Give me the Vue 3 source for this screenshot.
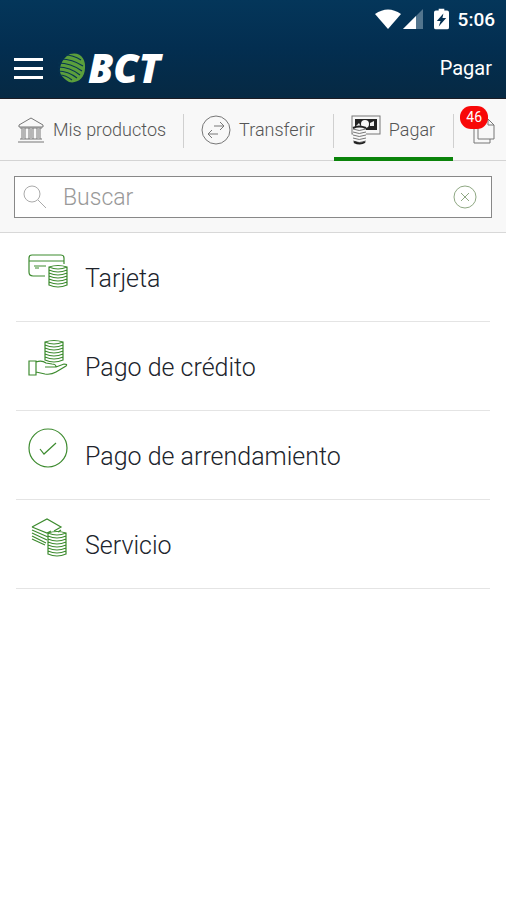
<template>
  <div class="app">
    <header class="header">
      <div class="status">
        <svg class="wifi" viewBox="0 0 26 20">
          <path d="M0 5Q13-4 26 5L13 20Z" fill="#fff" />
        </svg>
        <svg class="signal" viewBox="0 0 20 20">
          <path d="M20 0V20H0Z" fill="#52758e" />
          <path d="M13 7V20H0Z" fill="#fff" />
        </svg>
        <svg class="battery" viewBox="0 0 16 22">
          <path d="M5 0h6v2h3q2 0 2 2v16q0 2-2 2H2q-2 0-2-2V4q0-2 2-2h3z" fill="#fff" />
          <path d="M10 5 3 13h4l-2 6 8-9H9z" fill="#043052" />
        </svg>
        <span>5:06</span>
      </div>
      <div class="bar">
        <button class="menu" type="button" aria-label="Menú">
          <i></i><i></i><i></i>
        </button>
        <div class="logo">
          <svg viewBox="0 0 28 30">
            <path
              d="M12 1C23-2 28 7 27 15 27 25 19 31 11 29 7 27 5 24 3 22 0 16 3 6 12 1Z"
              fill="#5b9f3c"
            />
            <path
              d="M7 2Q15 2 23 7M3 6Q14 6 25 13M0 10Q13 10 24 18M0 14Q12 14 22 22M0 18Q10 18 19 25M1 22Q8 22 14 27"
              fill="none"
              stroke="#063453"
              stroke-width="1.1"
            />
          </svg>
          <span>BCT</span>
        </div>
        <h1>Pagar</h1>
      </div>
    </header>

    <nav class="tabs">
      <a class="tab" href="#productos">
        <svg class="bank" viewBox="0 0 28 26">
          <path
            d="M14 1 2 8v2h24V8zM3 11h22M3 22h22M1 25h26M5 11v11M8 11v11M12 11v11M16 11v11M20 11v11M23 11v11"
          />
          <path d="M6.500 11v11M14 11v11M21.500 11v11" stroke="#b5b5b5" stroke-width="2" />
        </svg>
        Mis productos
      </a>
      <a class="tab" href="#transferir">
        <svg class="swap" viewBox="0 0 30 30">
          <circle cx="15" cy="15" r="14" />
          <path d="M13 11h10M19 7l4 4-4 4M17 19H7M11 15l-4 4 4 4" />
        </svg>
        Transferir
      </a>
      <a class="tab active" href="#pagar" aria-current="page">
        <svg class="cash" viewBox="0 0 30 30">
          <rect x="1" y="1" width="28" height="18" stroke="#777" />
          <rect x="4" y="4" width="22" height="11" fill="#222" stroke="none" />
          <circle cx="14" cy="9" r="4" fill="#f8f8f8" stroke="none" />
          <path d="M5 11l3-3 2 4M19 8l4-2v5h-4z" fill="#eee" stroke="none" />
          <path d="M2 13q7-3 13 0v14q-6 4-13 0z" fill="#f8f8f8" stroke="none" />
          <path
            d="M2 14q6 3 13 0M2 17q6 3 13 0M2 20q6 3 13 0M2 23q6 3 13 0M2 26q6 3 13 0"
            stroke="#777"
          />
          <path d="M2 13q6-3 13 0M3 27q6 3 11 0" stroke="#222" stroke-width="2" />
        </svg>
        Pagar
      </a>
      <a class="tab" href="#solicitudes" aria-label="Solicitudes">
        <span class="docs">
          <svg viewBox="0 0 22 28">
            <path d="M5 3h10l6 6v14H5zM15 3v6h6M5 8H1v19h16v-4" />
          </svg>
          <span class="badge">46</span>
        </span>
      </a>
    </nav>

    <form class="search" role="search" @submit.prevent>
      <div class="field">
        <svg class="lens" viewBox="0 0 24 24">
          <circle cx="9" cy="9" r="8" />
          <path d="M15 15l8 8" />
        </svg>
        <input v-model="query" type="text" placeholder="Buscar" aria-label="Buscar" />
        <button type="button" class="clear" aria-label="Borrar" @click="query = ''">
          <svg viewBox="0 0 24 24">
            <circle cx="12" cy="12" r="11" />
            <path d="M8 8l8 8M16 8l-8 8" />
          </svg>
        </button>
      </div>
    </form>

    <ul class="list">
      <li v-for="item in filtered" :key="item.id">
        <a :href="'#' + item.id">
          <svg v-if="item.id === 'tarjeta'" viewBox="0 0 42 42">
            <path d="M18 25H6q-4 0-4-4V7q0-3 3-3h29q3 0 3 3v6M2 10h35" />
            <path d="M7 15h12M8 17h4" stroke-width="1" />
            <path :d="coins(22, 16, 6)" />
          </svg>
          <svg v-else-if="item.id === 'credito'" viewBox="0 1 42 42">
            <path :d="coins(18, 3, 6)" />
            <path
              d="M2 22h7v14H2zM9 23q6-2 10 1l6 1q4 0 4 3H18M29 28l8-3q4 0 2 2L29 33q-5 3-11 2l-9-2"
            />
          </svg>
          <svg v-else-if="item.id === 'arrendamiento'" viewBox="0 0 42 42">
            <circle cx="21" cy="19" r="19" />
            <path d="M13 20l4 5 12-11" />
          </svg>
          <svg v-else viewBox="0 3 42 42">
            <path
              d="M5 12 20 4l14 8-7 4M5 12l15 6 4-2M5 15l16 7M5 18l15 7M5 21l14 7M5 24l13 6M34 15l-3 2"
            />
            <path :d="coins(21, 18, 7)" />
          </svg>
          <span>{{ item.label }}</span>
        </a>
      </li>
    </ul>
  </div>
</template>

<script setup>
import { ref, computed } from "vue";

const query = ref("");

const items = [
  { id: "tarjeta", label: "Tarjeta" },
  { id: "credito", label: "Pago de crédito" },
  { id: "arrendamiento", label: "Pago de arrendamiento" },
  { id: "servicio", label: "Servicio" },
];

const filtered = computed(() =>
  items.filter((i) => i.label.toLowerCase().includes(query.value.toLowerCase()))
);

// Stack of coins: the top ellipse, then one curved edge per coin
function coins(x, y, count) {
  const bottom = y + count * 3;
  let d = `M${x} ${y}q9-3 18 0v${count * 3}q-9 4-18 0z`;
  for (let cy = y; cy < bottom; cy += 3) {
    d += `M${x} ${cy}q9 4 18 0`;
  }
  return d;
}
</script>

<style>
body {
  margin: 0;
  background: #fff;
}
</style>

<style scoped>
.app {
  font-family: Roboto, "Liberation Sans", sans-serif;
  font-weight: 300;
  color: #20242c;
  overflow: hidden;
}
svg {
  display: block;
  flex: none;
  overflow: visible;
}
a {
  color: inherit;
  text-decoration: none;
}
button {
  padding: 0;
  border: 0;
  background: none;
  cursor: pointer;
}
.header {
  background: linear-gradient(#04365a, #032e50 50%, #062943);
  border-bottom: 1px solid #1c1c24;
  color: #fff;
}
.status {
  display: flex;
  align-items: center;
  justify-content: flex-end;
  height: 38px;
  padding: 0 11px;
  font-size: 19px;
  font-weight: 500;
}
.wifi {
  width: 26px;
  height: 20px;
  margin-right: 2px;
}
.signal {
  width: 20px;
  height: 20px;
  margin-right: 11px;
}
.battery {
  width: 15px;
  height: 22px;
  margin-right: 9px;
}
.bar {
  display: flex;
  align-items: center;
  height: 60px;
  padding: 0 14px;
}
.menu {
  display: flex;
  flex-direction: column;
  gap: 6px;
  width: 29px;
}
.menu i {
  height: 3px;
  background: #fff;
}
.logo {
  display: flex;
  align-items: center;
  gap: 2px;
  margin-left: 15px;
  font: italic 800 40px/60px "Open Sans", sans-serif;
}
.logo svg {
  width: 28px;
  height: 30px;
}
h1 {
  margin: 0 0 0 auto;
  font-size: 20px;
  font-weight: 400;
}
.tabs {
  display: flex;
  height: 61px;
  background: #f8f8f8;
  border-bottom: 1px solid #d4d4d4;
}
.tab {
  position: relative;
  display: flex;
  flex: none;
  align-items: center;
  gap: 8px;
  padding: 0 17px;
  font-size: 18px;
  color: #555;
  white-space: nowrap;
}
.tab + .tab {
  padding: 0 18px;
}
.tab + .tab::before {
  content: "";
  position: absolute;
  left: 0;
  top: 15px;
  width: 1px;
  height: 34px;
  background: #d0d0d0;
}
.tab.active::after {
  content: "";
  position: absolute;
  left: 1px;
  right: 0;
  bottom: -1px;
  height: 4px;
  background: #0b840b;
}
.tab svg {
  fill: none;
  stroke: #777;
}
.bank {
  width: 28px;
  height: 26px;
}
.swap,
.cash {
  width: 30px;
  height: 30px;
}
.docs {
  position: relative;
  padding-left: 2px;
}
.docs svg {
  width: 22px;
  height: 28px;
}
.badge {
  position: absolute;
  left: -11px;
  top: -10px;
  width: 28px;
  border-radius: 11px;
  background: #f80808;
  color: #fff;
  font-size: 14px;
  font-weight: 400;
  line-height: 23px;
  text-align: center;
}
.search {
  padding: 15px 14px 14px;
  background: #f8f8f8;
  border-bottom: 1px solid #d8d8d8;
}
.field {
  display: flex;
  align-items: center;
  height: 40px;
  padding: 0 14px 0 8px;
  border: 1px solid #888;
  background: #fff;
}
.lens {
  width: 24px;
  height: 24px;
  fill: none;
  stroke: #aaa;
}
input {
  flex: 1;
  min-width: 0;
  margin-left: 16px;
  padding: 0;
  border: 0;
  outline: none;
  background: none;
  font: inherit;
  font-size: 23px;
}
input::placeholder {
  color: #999;
}
.clear svg {
  width: 24px;
  height: 24px;
  fill: none;
  stroke: #8fa883;
}
.list {
  margin: 0;
  padding: 0 16px;
  list-style: none;
}
.list li {
  border-bottom: 1px solid #e4e4e4;
}
.list a {
  display: flex;
  gap: 16px;
  height: 70px;
  padding: 18px 0 0 11px;
}
.list svg {
  width: 42px;
  height: 42px;
  fill: none;
  stroke: #3d8b2f;
  stroke-width: 1.2;
}
.list span {
  padding-top: 12px;
  font-size: 25px;
  line-height: 32px;
}
</style>
